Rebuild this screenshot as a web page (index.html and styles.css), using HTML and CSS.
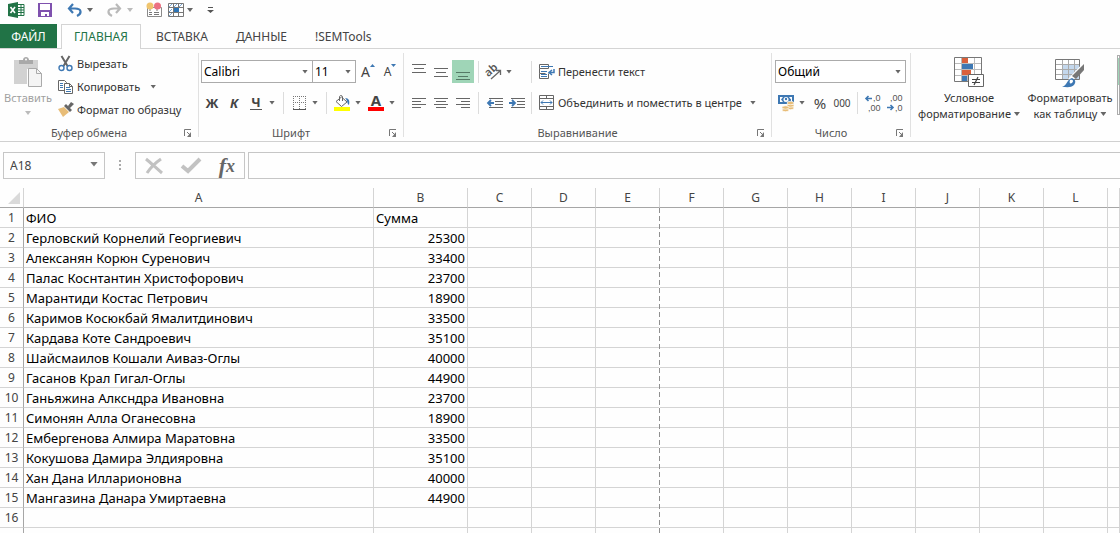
FILE: index.html
```html
<!DOCTYPE html>
<html lang="ru">
<head>
<meta charset="utf-8">
<title>Excel</title>
<link rel="stylesheet" href="styles.css">
</head>
<body>
<header class="quick">
  <svg class="quick-logo" width="17" height="16" viewBox="0 0 17 16"><path fill="#217346" d="M0 2l10-2v16L0 14z"/><path fill="none" stroke="#217346" d="M10 2.500h6v11h-6M10 5.500h6M10 8h6M10 10.500h6M13 2.500v11"/><path stroke="#fff" stroke-width="1.600" d="M2.500 5l4.500 6M7 5l-4.500 6"/></svg>
  <button class="quick-btn save" aria-label="Сохранить"><svg width="14" height="14" viewBox="0 0 14 14"><path fill="#7f51ae" d="M0 0h14v14H0z"/><path fill="#fff" d="M2 1h10v6H2zM3 9h8v4H9v-2H7v2H3z"/></svg></button>
  <button class="quick-btn undo" aria-label="Отменить"><svg width="15" height="13" viewBox="0 0 15 13"><path fill="none" stroke="#3e78b3" stroke-width="2.200" d="M6 0L2 4.500 6 9M2 4.500h6c7 0 7 5 2 7.500"/></svg></button>
  <button class="caret-btn" aria-label="Список отмены"><i class="caret"></i></button>
  <button class="quick-btn redo" aria-label="Вернуть"><svg width="15" height="13" viewBox="0 0 15 13"><path fill="none" stroke="#b9b9b9" stroke-width="2.200" d="M9 0l4 4.500L9 9M13 4.500H7c-7 0-7 5-2 7.500"/></svg></button>
  <button class="caret-btn" aria-label="Список возврата"><i class="caret pale"></i></button>
  <button class="quick-btn marks" aria-label="Пометки"><svg width="17" height="16" viewBox="0 0 17 16"><path fill="#fff" stroke="#8a8a8a" d="M1.500 5.500h14v9h-14z"/><path stroke="#777" d="M3 10.500h3M8 10.500h5M3 12.500h3M8 12.500h5M4 7v2M11 7v2"/><circle cx="4" cy="4" r="3.500" fill="#f0c56f"/><circle cx="11.500" cy="4" r="3.500" fill="#eb7182"/></svg></button>
  <button class="quick-btn freeze" aria-label="Таблица"><svg width="16" height="14" viewBox="0 0 16 14"><path fill="#fff" stroke="#777" d="M.5.5h15v13H.5zM.5 4.500h15M.5 9.500h15M5.500.5v13M10.500.5v13"/><path fill="#2e75b6" d="M6 5h5v4H6z"/><path stroke="#79a5d2" d="M1 4l3-3M6 4l3-3M11 4l3-3M1 9l3-3M1 13l3-3"/></svg></button>
  <button class="caret-btn" aria-label="Варианты таблицы"><i class="caret"></i></button>
  <button class="quick-btn more" aria-label="Настройка панели"><svg width="7" height="6" viewBox="0 0 7 6"><path fill="#555" d="M1 0h5v1H1zM0 3h7L3.500 6z"/></svg></button>
</header>

<nav class="tabs">
  <a class="tab file" href="#file">ФАЙЛ</a>
  <a class="tab active" href="#home">ГЛАВНАЯ</a>
  <a class="tab" href="#insert">ВСТАВКА</a>
  <a class="tab" href="#data">ДАННЫЕ</a>
  <a class="tab" href="#semtools">!SEMTools</a>
</nav>

<main>
<section class="ribbon">
  <div class="group clipboard">
    <div class="group-body">
      <button class="big paste">
        <svg width="29" height="31" viewBox="0 0 29 31"><path fill="#d2d2d2" d="M0 3h24v9H13v15H0z"/><path fill="#a9a9a9" d="M5 3h4c0-4 6-4 6 0h4v4H5z"/><circle cx="12" cy="2.500" r="1" fill="#fff"/><path fill="#f4f4f4" stroke="#aaa" d="M14.500 11.500h8l5 5v13h-13z"/><path fill="none" stroke="#aaa" d="M22.500 11.500v5h5"/></svg>
        <span>Вставить</span><i class="caret pale"></i>
      </button>
      <div class="stack">
        <button class="line"><svg width="16" height="16" viewBox="0 0 16 16"><path fill="none" stroke="#666" stroke-width="2" d="M3.500 0l6 10M11.500 0l-6 10"/><circle cx="3.500" cy="12" r="2.500" fill="#fff" stroke="#3e78b3" stroke-width="1.400"/><circle cx="11.500" cy="12" r="2.500" fill="#fff" stroke="#3e78b3" stroke-width="1.400"/></svg>Вырезать</button>
        <button class="line"><svg width="16" height="16" viewBox="0 0 16 16"><path fill="#fff" stroke="#666" d="M.5 1.500h6l2 2v8h-8z"/><path stroke="#3e78b3" d="M2 4.500h3M2 6.500h3M2 8.500h3"/><path fill="#fff" stroke="#666" d="M6.500 4.500h5l3 3v7h-8z"/><path fill="none" stroke="#666" d="M11.500 4.500v3h3"/><path stroke="#3e78b3" d="M8 8.500h4M8 10.500h5M8 12.500h5"/></svg>Копировать<i class="caret far"></i></button>
        <button class="line"><svg width="16" height="16" viewBox="0 0 16 16"><path fill="#e8bd78" d="M0 7l6-2 5 5-6 5z"/><path fill="#666" d="M6 4l2-2 6 6-2 2zM10 4l3-4 3 2-4 4z"/></svg>Формат по образцу</button>
      </div>
    </div>
    <footer class="caption"><span>Буфер обмена</span><button class="launcher" aria-label="Параметры буфера"><svg width="8" height="8" viewBox="0 0 8 8"><path fill="none" stroke="#777" d="M.5 7V.5H7M3 3l3 3"/><path fill="#777" d="M7 3v5H3z"/></svg></button></footer>
  </div>

  <div class="group font">
    <div class="group-body rows">
      <div class="row">
        <label class="combo font-name"><select aria-label="Шрифт"><option>Calibri</option></select><i class="caret"></i></label>
        <label class="combo font-size"><select aria-label="Размер шрифта"><option>11</option></select><i class="caret"></i></label>
        <button class="tool grow" aria-label="Увеличить размер"><span>A</span><svg width="5" height="3" viewBox="0 0 5 3"><path fill="#3e78b3" d="M0 3h5L2.500 0z"/></svg></button>
        <button class="tool shrink" aria-label="Уменьшить размер"><span>A</span><svg width="5" height="3" viewBox="0 0 5 3"><path fill="#3e78b3" d="M0 0h5L2.500 3z"/></svg></button>
      </div>
      <div class="row">
        <button class="tool bold">Ж</button>
        <button class="tool bold italic">К</button>
        <button class="tool bold"><span class="under">Ч</span></button>
        <button class="caret-btn" aria-label="Вид подчёркивания"><i class="caret"></i></button>
        <i class="split"></i>
        <button class="tool" aria-label="Границы"><svg width="13" height="14" viewBox="0 0 13 14"><path fill="none" stroke="#777" stroke-dasharray="1 1" d="M0 .5h13M.5 0v13M6.500 0v13M12.500 0v13M0 6.500h13"/><path stroke="#555" d="M0 13.500h13"/></svg></button>
        <button class="caret-btn" aria-label="Виды границ"><i class="caret"></i></button>
        <i class="split"></i>
        <button class="tool" aria-label="Цвет заливки"><svg width="16" height="16" viewBox="0 0 16 16"><path fill="#ff0" d="M0 12h16v4H0z"/><path fill="#fff" stroke="#666" d="M2 6.500L7.500 2l5.500 5-5.500 4.500zM5.500 6V2c0-2 3-2 3 0v4"/><path fill="#3e78b3" d="M11 3c4 0 5 3 4 7-2-1-1-4-4-7z"/></svg></button>
        <button class="caret-btn" aria-label="Палитра заливки"><i class="caret"></i></button>
        <button class="tool color" aria-label="Цвет текста"><span>A</span></button>
        <button class="caret-btn" aria-label="Палитра текста"><i class="caret"></i></button>
      </div>
    </div>
    <footer class="caption"><span>Шрифт</span><button class="launcher" aria-label="Параметры шрифта"><svg width="8" height="8" viewBox="0 0 8 8"><path fill="none" stroke="#777" d="M.5 7V.5H7M3 3l3 3"/><path fill="#777" d="M7 3v5H3z"/></svg></button></footer>
  </div>

  <div class="group align">
    <div class="group-body rows">
      <div class="row">
        <button class="tool" aria-label="По верхнему краю"><svg width="14" height="16" viewBox="0 0 14 16"><path stroke="#666" d="M0 .5h14M2 4.500h10M0 8.500h14"/></svg></button>
        <button class="tool" aria-label="По середине"><svg width="14" height="16" viewBox="0 0 14 16"><path stroke="#666" d="M0 4.500h14M2 8.500h10M0 12.500h14"/></svg></button>
        <button class="tool pressed" aria-label="По нижнему краю" aria-pressed="true"><svg width="14" height="16" viewBox="0 0 14 16"><path stroke="#557a66" d="M0 8.500h14M2 12.500h10M0 15.500h14"/></svg></button>
        <i class="split"></i>
        <button class="tool wide" aria-label="Ориентация"><svg width="18" height="16" viewBox="0 0 18 16"><text class="angle-text" x="1" y="11" transform="rotate(-42 5 9)">ab</text><path fill="none" stroke="#666" stroke-width="1.300" d="M6 15l9-8M11 6.500h4.500v4.500"/></svg></button>
        <button class="caret-btn" aria-label="Варианты ориентации"><i class="caret"></i></button>
        <i class="split late"></i>
        <button class="line"><svg width="16" height="16" viewBox="0 0 16 16"><path fill="#fff" stroke="#666" d="M.5.5h9v4h-9zM9.500 9.500v5h-9v-5h6M.5 4.500v5"/><path stroke="#3e78b3" d="M2 2.500h12M2 7.500h6M2 10.500h6M2 12.500h6"/><path fill="none" stroke="#3e78b3" stroke-width="1.500" d="M15 5v3.500h-4M13 6l-3 2.500 3 2.500"/></svg>Перенести текст</button>
      </div>
      <div class="row">
        <button class="tool" aria-label="По левому краю"><svg width="14" height="12" viewBox="0 0 14 12"><path stroke="#666" d="M0 1.500h14M0 4.500h9M0 7.500h14M0 10.500h9"/></svg></button>
        <button class="tool" aria-label="По центру"><svg width="14" height="12" viewBox="0 0 14 12"><path stroke="#666" d="M0 1.500h14M2 4.500h10M0 7.500h14M2 10.500h10"/></svg></button>
        <button class="tool" aria-label="По правому краю"><svg width="14" height="12" viewBox="0 0 14 12"><path stroke="#666" d="M0 1.500h14M5 4.500h9M0 7.500h14M5 10.500h9"/></svg></button>
        <i class="split"></i>
        <button class="tool" aria-label="Уменьшить отступ"><svg width="16" height="12" viewBox="0 0 16 12"><path stroke="#666" d="M2 1.500h14M8 4.500h8M8 7.500h8M2 10.500h14"/><path fill="none" stroke="#3e78b3" stroke-width="1.800" d="M7 6H1M4 3L1 6l3 3"/></svg></button>
        <button class="tool" aria-label="Увеличить отступ"><svg width="16" height="12" viewBox="0 0 16 12"><path stroke="#666" d="M2 1.500h14M8 4.500h8M8 7.500h8M2 10.500h14"/><path fill="none" stroke="#3e78b3" stroke-width="1.800" d="M0 6h6M3 3l3 3-3 3"/></svg></button>
        <i class="split end"></i>
        <button class="line"><svg width="16" height="16" viewBox="0 0 16 16"><path fill="#fff" stroke="#666" d="M.5.5h14v14H.5zM.5 3.500h14M.5 11.500h14M7.500.5v3M7.500 11.500v3"/><path fill="none" stroke="#3e78b3" d="M2 7.500h11M4 5.500l-2 2 2 2M11 5.500l2 2-2 2"/></svg>Объединить и поместить в центре</button>
        <button class="caret-btn" aria-label="Варианты объединения"><i class="caret"></i></button>
      </div>
    </div>
    <footer class="caption"><span>Выравнивание</span><button class="launcher" aria-label="Параметры выравнивания"><svg width="8" height="8" viewBox="0 0 8 8"><path fill="none" stroke="#777" d="M.5 7V.5H7M3 3l3 3"/><path fill="#777" d="M7 3v5H3z"/></svg></button></footer>
  </div>

  <div class="group number">
    <div class="group-body rows">
      <div class="row">
        <label class="combo format"><select aria-label="Числовой формат"><option>Общий</option></select><i class="caret"></i></label>
      </div>
      <div class="row">
        <button class="tool" aria-label="Финансовый формат"><svg width="16" height="16" viewBox="0 0 16 16"><path fill="#3e78b3" d="M0 0h16v9H0z"/><path fill="#fff" d="M2 2h3L3 4.500 5 7H2zM14 2h-3l2 2.500V6h1z"/><circle cx="8" cy="4.500" r="2.500" fill="#fff"/><circle cx="8" cy="4" r="1.200" fill="#3e78b3"/><g fill="#e8bd78" stroke="#fff" stroke-width=".7"><ellipse cx="12.500" cy="13" rx="3.500" ry="1.700"/><ellipse cx="12.500" cy="10.500" rx="3.500" ry="1.700"/><ellipse cx="12.500" cy="8" rx="3.500" ry="1.700"/><ellipse cx="7.500" cy="15" rx="3.500" ry="1.700"/><ellipse cx="7.500" cy="12.500" rx="3.500" ry="1.700"/></g></svg></button>
        <button class="caret-btn" aria-label="Валюты"><i class="caret"></i></button>
        <button class="tool percent">%</button>
        <button class="tool zeros">000</button>
        <i class="split"></i>
        <button class="tool" aria-label="Увеличить разрядность"><svg class="digits" width="16" height="18" viewBox="0 0 16 18"><path fill="none" stroke="#3e78b3" stroke-width="1.600" d="M7 4.500H1M3.500 2L1 4.500 3.500 7"/><text x="8" y="7">,0</text><text x="3" y="17">,00</text></svg></button>
        <button class="tool" aria-label="Уменьшить разрядность"><svg class="digits" width="16" height="18" viewBox="0 0 16 18"><text x="3" y="7">,00</text><path fill="none" stroke="#3e78b3" stroke-width="1.600" d="M0 13.500h6M3.500 11L6 13.500 3.500 16"/><text x="8" y="17">,0</text></svg></button>
      </div>
    </div>
    <footer class="caption"><span>Число</span><button class="launcher" aria-label="Параметры числа"><svg width="8" height="8" viewBox="0 0 8 8"><path fill="none" stroke="#777" d="M.5 7V.5H7M3 3l3 3"/><path fill="#777" d="M7 3v5H3z"/></svg></button></footer>
  </div>

  <div class="group styles">
    <button class="big conditional">
      <svg width="30" height="31" viewBox="0 0 30 31"><path fill="#fff" stroke="#777" d="M.5.5h27v24H.5z"/><path stroke="#bbb" d="M1 6.500h26M1 12.500h26M1 18.500h26M7.500 1v23M13.500 1v23M20.500 1v23"/><path fill="#d9603b" d="M8 1h6v5H8zM8 13h9v5H8z"/><path fill="#3e78b3" d="M8 7h11v5H8zM8 19h5v5H8z"/><path fill="#fff" stroke="#666" d="M14.500 17.500h15v12h-15z"/><path stroke="#444" stroke-width="1.200" d="M18 22.500h8M18 25.500h8M24 20l-4 8"/></svg>
      <span>Условное<br>форматирование<i class="caret"></i></span>
    </button>
    <button class="big as-table">
      <svg width="30" height="31" viewBox="0 0 30 31"><path fill="#fff" d="M1 3h24v19H1z"/><path fill="#c4d8ed" d="M7 8h18v14H7z"/><path fill="none" stroke="#aaa" d="M1 7.500h24M1 12.500h24M1 17.500h24M7.500 3v19M13.500 3v19M19.500 3v19"/><path fill="none" stroke="#777" d="M.5 2.500h24v20H.5z"/><path fill="#fff" d="M29 5v8L17 24l-4-2z"/><path fill="#777" d="M29 7v6l-8 9-4-3z"/><path fill="#3e78b3" d="M7 30c5-1 5-8 10-9 4 2 4 4 2 7-3 3-7 2-12 2z"/><path fill="#fff" d="M15 23c3-1 4 1 2 3-2 1-3 0-2-3z"/></svg>
      <span>Форматировать<br>как таблицу<i class="caret"></i></span>
    </button>
    <div class="gallery"><div class="swatch"></div></div>
  </div>
</section>

<section class="formula">
  <label class="name-box"><input aria-label="Имя ячейки" value="A18"><i class="caret big-caret"></i></label>
  <svg class="dots" width="2" height="11" viewBox="0 0 2 11"><path fill="#aaa" d="M0 0h2v2H0zM0 4h2v2H0zM0 8h2v2H0z"/></svg>
  <div class="formula-tools">
    <button aria-label="Отмена"><svg width="18" height="16" viewBox="0 0 18 16"><path fill="none" stroke="#c2c2c2" stroke-width="3" d="M1 1c5 4 10 9 16 14M16 1C10 5 6 9 2 15"/></svg></button>
    <button aria-label="Ввод"><svg width="20" height="16" viewBox="0 0 20 16"><path fill="none" stroke="#c2c2c2" stroke-width="4" d="M1 8l6 5L19 1"/></svg></button>
    <button class="fx" aria-label="Вставить функцию">f<small>x</small></button>
  </div>
  <input class="formula-input" aria-label="Строка формул">
</section>

<section class="sheet">
<table>
<colgroup><col class="c-num"><col class="c-a"><col class="c-b"><col class="c"><col class="c"><col class="c"><col class="c"><col class="c"><col class="c"><col class="c"><col class="c"><col class="c"><col class="c"><col></colgroup>
<thead><tr><th class="corner"><svg width="12" height="12" viewBox="0 0 12 12"><path fill="#dadada" d="M12 0v12H0z"/></svg></th><th>A</th><th>B</th><th>C</th><th>D</th><th>E</th><th>F</th><th>G</th><th>H</th><th>I</th><th>J</th><th>K</th><th>L</th><th></th></tr></thead>
<tbody>
<tr><th>1</th><td>ФИО</td><td class="left">Сумма</td><td></td><td></td><td></td><td></td><td></td><td></td><td></td><td></td><td></td><td></td><td></td></tr>
<tr><th>2</th><td>Герловский Корнелий Георгиевич</td><td>25300</td><td></td><td></td><td></td><td></td><td></td><td></td><td></td><td></td><td></td><td></td><td></td></tr>
<tr><th>3</th><td>Алексанян Корюн Суренович</td><td>33400</td><td></td><td></td><td></td><td></td><td></td><td></td><td></td><td></td><td></td><td></td><td></td></tr>
<tr><th>4</th><td>Палас Коснтантин Христофорович</td><td>23700</td><td></td><td></td><td></td><td></td><td></td><td></td><td></td><td></td><td></td><td></td><td></td></tr>
<tr><th>5</th><td>Марантиди Костас Петрович</td><td>18900</td><td></td><td></td><td></td><td></td><td></td><td></td><td></td><td></td><td></td><td></td><td></td></tr>
<tr><th>6</th><td>Каримов Косюкбай Ямалитдинович</td><td>33500</td><td></td><td></td><td></td><td></td><td></td><td></td><td></td><td></td><td></td><td></td><td></td></tr>
<tr><th>7</th><td>Кардава Коте Сандроевич</td><td>35100</td><td></td><td></td><td></td><td></td><td></td><td></td><td></td><td></td><td></td><td></td><td></td></tr>
<tr><th>8</th><td>Шайсмаилов Кошали Аиваз-Оглы</td><td>40000</td><td></td><td></td><td></td><td></td><td></td><td></td><td></td><td></td><td></td><td></td><td></td></tr>
<tr><th>9</th><td>Гасанов Крал Гигал-Оглы</td><td>44900</td><td></td><td></td><td></td><td></td><td></td><td></td><td></td><td></td><td></td><td></td><td></td></tr>
<tr><th>10</th><td>Ганьяжина Алксндра Ивановна</td><td>23700</td><td></td><td></td><td></td><td></td><td></td><td></td><td></td><td></td><td></td><td></td><td></td></tr>
<tr><th>11</th><td>Симонян Алла Оганесовна</td><td>18900</td><td></td><td></td><td></td><td></td><td></td><td></td><td></td><td></td><td></td><td></td><td></td></tr>
<tr><th>12</th><td>Ембергенова Алмира Маратовна</td><td>33500</td><td></td><td></td><td></td><td></td><td></td><td></td><td></td><td></td><td></td><td></td><td></td></tr>
<tr><th>13</th><td>Кокушова Дамира Элдияровна</td><td>35100</td><td></td><td></td><td></td><td></td><td></td><td></td><td></td><td></td><td></td><td></td><td></td></tr>
<tr><th>14</th><td>Хан Дана Илларионовна</td><td>40000</td><td></td><td></td><td></td><td></td><td></td><td></td><td></td><td></td><td></td><td></td><td></td></tr>
<tr><th>15</th><td>Мангазина Данара Умиртаевна</td><td>44900</td><td></td><td></td><td></td><td></td><td></td><td></td><td></td><td></td><td></td><td></td><td></td></tr>
<tr><th>16</th><td></td><td></td><td></td><td></td><td></td><td></td><td></td><td></td><td></td><td></td><td></td><td></td><td></td></tr>
<tr><th></th><td></td><td></td><td></td><td></td><td></td><td></td><td></td><td></td><td></td><td></td><td></td><td></td><td></td></tr>
</tbody>
</table>
<div class="page-break"></div>
</section>
</main>
</body>
</html>
```
FILE: styles.css
```css
* { box-sizing: border-box; }
body {
  margin: 0;
  height: 100vh;
  overflow: hidden;
  background: #fefefe;
  color: #444;
  font: 12px/16px "Noto Sans", "Open Sans", sans-serif;
}
button, input, select { font: inherit; color: inherit; }
button {
  display: inline-flex;
  align-items: center;
  justify-content: center;
  flex: none;
  margin: 0;
  padding: 0;
  border: 0;
  background: none;
  white-space: nowrap;
}
svg { display: block; flex: none; overflow: visible; }

.caret {
  display: inline-block;
  flex: none;
  width: 6px;
  height: 4px;
  background: #666;
  clip-path: polygon(0 0, 100% 0, 50% 100%);
}
.caret.pale { background: #bbb; }
.caret.big-caret { width: 8px; height: 5px; background: #777; }
.caret-btn { width: 10px; height: 22px; }

/* quick access bar */
.quick { display: flex; align-items: center; height: 24px; padding: 0 8px 4px; }
.save { margin-left: 13px; }
.undo { margin: 0 3px 0 15px; }
.redo { margin: 0 3px 0 12px; }
.marks { margin-left: 11px; }
.freeze { margin: 0 1px 0 5px; }
.more { margin-left: 12px; }

/* tabs */
.tabs { display: flex; height: 25px; border-bottom: 1px solid #d4d4d4; }
.tab {
  padding: 0 14px;
  color: #444;
  line-height: 25px;
  text-decoration: none;
}
.tab.file { width: 57px; margin-right: 4px; padding: 0; background: #217346; color: #fff; text-align: center; }
.tab.active {
  width: 80px;
  height: 25px;
  margin-right: 1px;
  padding: 0;
  border: 1px solid #d4d4d4;
  border-bottom: 0;
  background: #fefefe;
  color: #217346;
  text-align: center;
  line-height: 23px;
}

/* ribbon */
.ribbon { display: flex; height: 93px; border-bottom: 1px solid #d0d0d0; overflow: hidden; }
.group {
  display: flex;
  flex-direction: column;
  flex: none;
  padding-top: 3px;
  background: linear-gradient(#e1e1e1, #e1e1e1) right 4px / 1px 84px no-repeat;
}
.group-body { display: flex; flex: 1; }
.clipboard { width: 199px; }
.font { width: 205px; }
.align { width: 368px; }
.number { width: 139px; }
.styles { flex: 1; flex-direction: row; min-width: 0; align-items: flex-start; background: none; }

.big, .line, .caption { font-size: 11px; }
.line, .big { color: #333; }
.caption { display: flex; align-items: center; height: 16px; color: #555; text-align: center; }
.caption span { flex: 1; }
.launcher { width: 8px; height: 8px; margin: 0 7px 0 6px; }

.big { flex-direction: column; justify-content: flex-start; padding-top: 5px; }
.big span { margin-top: 2px; }
.big span .caret { margin: 0 0 2px 3px; }
.big.paste { width: 56px; color: #a0a0a0; }
.paste .caret { margin-top: 5px; }
.stack { display: flex; flex-direction: column; align-items: flex-start; margin-left: 2px; }
.line { height: 23px; gap: 3px; }
.far { margin-left: 7px; }

.rows { flex-direction: column; gap: 8px; padding-top: 8px; }
.row { display: flex; align-items: center; height: 23px; }
.tool { width: 22px; height: 23px; }
.split { flex: none; width: 1px; height: 22px; background: #dcdcdc; }

.combo { display: flex; align-items: center; height: 23px; border: 1px solid #ababab; background: #fff; }
.combo select {
  flex: 1;
  min-width: 0;
  height: 21px;
  padding: 0 2px;
  border: 0;
  appearance: none;
  background: none;
  color: #000;
}
.combo .caret { margin-right: 4px; }
.font-name { width: 112px; }
.font-size { width: 43px; border-left: 0; }

.font .rows { padding-left: 2px; }
.grow, .shrink { align-items: flex-start; }
.grow { font-size: 14px; line-height: 24px; margin-left: 1px; }
.shrink { font-size: 12px; line-height: 24px; }
.grow svg, .shrink svg { margin-top: 4px; }
.bold { font-size: 13px; font-weight: 700; }
.italic { font-style: italic; }
.under { border-bottom: 1px solid #555; line-height: 14px; padding: 0 1px; }
.font .split { margin: 0 4px 0 6px; }
.color { margin-left: 2px; }
.color span { width: 16px; height: 16px; border-bottom: 4px solid #f00; font-size: 15px; font-weight: 700; line-height: 11px; }

.align .rows { padding-left: 4px; }
.align .split { margin: 0 5px 0 4px; }
.align .split.late { margin: 0 7px 0 17px; }
.align .split.end { margin: 0 7px 0 3px; }
.align .caret-btn { margin-left: 6px; }
.align .wide { width: 20px; }
.align .wide + .caret-btn { margin-left: 0; }
.pressed { background: #9fd5b7; }
.angle-text { font-size: 11px; font-weight: 600; fill: #555; }

.number .rows { padding-left: 3px; }
.format { width: 131px; }
.number .split { margin: 0 4px; }
.percent { font-size: 15px; }
.zeros { font-size: 10px; }
.number .caret-btn { margin-right: 2px; }
.digits { font: 9px/9px "Liberation Sans", sans-serif; fill: #555; }

.conditional { width: 116px; }
.as-table { width: 86px; margin-right: 4px; }
.gallery { width: 64px; height: 60px; margin-top: 3px; padding-top: 2px; border: 1px solid #ababab; }
.swatch { height: 27px; background: #9fd5b7; }

/* formula bar */
.formula { display: flex; height: 46px; padding: 10px 0 9px 3px; }
.name-box { display: flex; align-items: center; width: 102px; border: 1px solid #c6c6c6; }
.name-box input { flex: 1; min-width: 0; padding: 0 6px; border: 0; background: none; outline: 0; }
.name-box .caret { margin: 0 6px 3px 0; }
.dots { margin: 8px 14px 0; }
.formula-tools { display: flex; align-items: center; justify-content: space-between; width: 110px; padding: 0 9px; border: 1px solid #c6c6c6; }
.fx { font: italic 700 22px/22px "Liberation Serif", serif; color: #666; }
.fx small { font-size: 18px; }
.formula-input { flex: 1; min-width: 0; margin-left: 3px; border: 1px solid #c6c6c6; border-right: 0; background: #fefefe; outline: 0; }

/* sheet */
.sheet { position: relative; overflow: hidden; }
table { width: 100%; table-layout: fixed; border-spacing: 0; color: #000; font-size: 13px; line-height: 18px; }
.c-num { width: 24px; }
.c-a { width: 350px; }
.c-b { width: 94px; }
.c { width: 64px; }
th, td { height: 20px; padding: 1px 2px 0; border: 0 solid #d4d4d4; border-width: 0 1px 1px 0; white-space: nowrap; }
td { text-align: right; }
td:nth-child(2), .left { text-align: left; }
th { font-weight: 400; font-size: 12px; color: #444; }
thead th { border-bottom-color: #a6a6a6; }
tbody th { padding: 1px 0 0; border-right-color: #a6a6a6; }
.corner svg { margin-left: 6px; }
.page-break {
  position: absolute;
  top: 20px;
  bottom: 0;
  left: 659px;
  width: 1px;
  background: repeating-linear-gradient(#8f8f8f 0 5px, #fefefe 5px 8px);
}
```
